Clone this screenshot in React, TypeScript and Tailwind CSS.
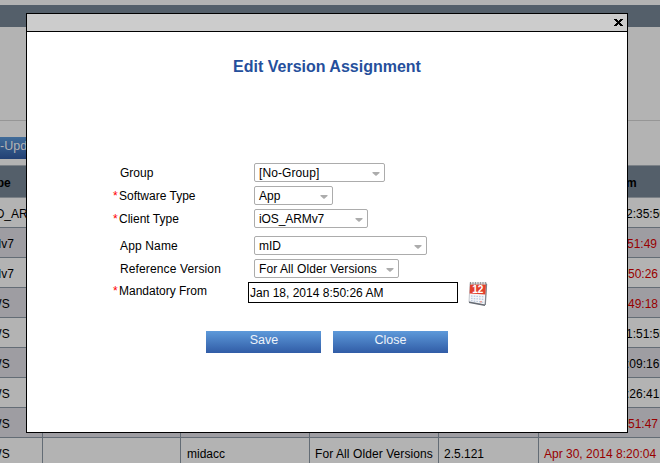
import React from "react";

type Row = { client: string; time: string; pad: string; red?: boolean };

const rows: Row[] = [
  { client: "ANDROID_ARM", time: "2:35:56", pad: "pl-[87px]" },
  { client: "iOS_ARMv7", time: "51:49", pad: "pl-[88px]", red: true },
  { client: "iOS_ARMv7", time: "50:26", pad: "pl-[89px]", red: true },
  { client: "WINDOWS", time: "49:18", pad: "pl-[89px]", red: true },
  { client: "WINDOWS", time: "1:51:55", pad: "pl-[87px]" },
  { client: "WINDOWS", time: ":09:16", pad: "pl-[87px]" },
  { client: "WINDOWS", time: ":26:41", pad: "pl-[87px]" },
  { client: "WINDOWS", time: "51:47", pad: "pl-[89px]", red: true },
];

const cell = "h-full shrink-0 border-r border-[#636c75] whitespace-nowrap overflow-hidden";

function TableRow({ client, shade, children }: { client: string; shade: boolean; children: React.ReactNode }) {
  return (
    <div className={`flex h-[30px] w-[760px] shrink-0 border-b border-[#636c75] leading-[33px] ${shade ? "bg-[#9e9da2]" : "bg-[#b3b3b3]"}`}>
      <div className={`${cell} w-[99px] ${client === "iOS_ARMv7" ? "pl-[4px]" : "pl-[5px]"}`}>{client}</div>
      {children}
    </div>
  );
}

function Select({ value, width, tracking = "" }: { value: string; width: string; tracking?: string }) {
  return (
    <div className={`flex h-[19px] items-center justify-between rounded-[2px] border border-[#acacac] pr-[4px] pl-[4px] ${width}`}>
      <span className={`leading-[17px] whitespace-nowrap ${tracking}`}><span className="relative top-px">{value}</span></span>
      <svg width="8" height="4" viewBox="0 0 8 4" className="mt-[3px] shrink-0">
        <path d="M0.5 0H7.5V1L4 4L0.5 1Z" fill="#acacac" />
      </svg>
    </div>
  );
}

function Field({ label, required, top, tracking = "", children }: { label: string; required?: boolean; top: string; tracking?: string; children: React.ReactNode }) {
  return (
    <div className={`flex h-[19px] items-center ${top}`}>
      <div className="flex w-[141px] items-center pt-[2px] leading-[19px]">
        <span className="w-[6px] text-[#ff0000]">{required ? "*" : ""}</span>
        <span className={`${required ? "" : "pl-[1px]"} ${tracking}`}>{label}</span>
      </div>
      {children}
    </div>
  );
}

function Calendar() {
  return (
    <svg width="20" height="26" viewBox="0 0 20 26" className="ml-[10px]">
      <path d="M2 2.5L18.5 2L17 24L1 21Z" fill="#f5f6f8" stroke="#b5bac2" strokeWidth=".8" />
      <path d="M1 21.3L17 24.3" stroke="#666b73" strokeWidth="1.5" />
      <path d="M18.6 3L17.3 24" stroke="#7d828a" strokeWidth="1.2" />
      <path d="M2 3.6H18L17.3 13.6L1.6 12.6Z" fill="#e2402c" />
      <path d="M2.5 3.4V1M5 3.4V1M7.5 3.4V1M10 3.4V1M12.5 3.4V1M15 3.4V1M17.5 3.4V1" stroke="#777" strokeWidth="1.2" />
      <path d="M2.5 2H18" stroke="#ddd" strokeWidth=".7" />
      <path d="M3 15L16 15.8M3 17.4L16 18.4M3 19.7L15.5 21.3" stroke="#bccbe0" strokeWidth="1.3" strokeDasharray="1.6 1.1" />
      <path d="M12 20.7H14" stroke="#e6a29a" strokeWidth="1.5" />
      <text x="4.2" y="12" fontSize="10" fontWeight="700" fill="#fff" fontFamily="Liberation Sans">12</text>
    </svg>
  );
}

function Dialog() {
  return (
    <div className="absolute top-[13px] left-[26px] flex h-[420px] w-[602px] flex-col border border-black bg-white">
      <div className="flex h-[18px] shrink-0 items-center justify-end border-b border-black bg-[#cccccc] pr-[4px]">
        <svg width="9" height="7" viewBox="0 0 9 7" shapeRendering="crispEdges">
          <path d="M0 0H3V1H6V0H9V1H8V2H7V3H6V4H7V5H8V6H9V7H6V6H5V5H4V6H3V7H0V6H1V5H2V4H3V3H2V2H1V1H0Z" fill="#000" />
          <path d="M4 1H5V2H4Z" fill="#cccccc" />
        </svg>
      </div>
      <h1 className="mt-[25px] text-center text-[16px] leading-[20px] font-bold text-[#254f9c]">Edit Version Assignment</h1>
      <div className="mt-[86px] ml-[86px] flex flex-col">
        <Field label="Group" top=""><Select value="[No-Group]" width="w-[131px]" tracking="tracking-[0.1px]" /></Field>
        <Field label="Software Type" required top="mt-[4px]"><Select value="App" width="w-[79px]" /></Field>
        <Field label="Client Type" required top="mt-[4px]"><Select value="iOS_ARMv7" width="w-[114px]" tracking="-tracking-[0.1px]" /></Field>
        <Field label="App Name" top="mt-[8px]" tracking="tracking-[0.15px]"><Select value="mID" width="w-[173px]" /></Field>
        <Field label="Reference Version" top="mt-[4px]" tracking="tracking-[0.13px]"><Select value="For All Older Versions" width="w-[145px]" tracking="tracking-[0.08px]" /></Field>
        <div className="mt-[4px] flex">
          <div className="flex w-[135px] pt-[1px] leading-[17px]">
            <span className="w-[6px] text-[#ff0000]">*</span>Mandatory From
          </div>
          <div className="h-[21px] w-[210px] border border-black pl-[1px] leading-[20px]">Jan 18, 2014 8:50:26 AM</div>
          <div className="-mt-[1px] h-[21px]"><Calendar /></div>
        </div>
      </div>
      <div className="mt-[28px] ml-[179px] flex gap-[12px] text-[12.5px] leading-[19px] text-[#eef3fa]">
        <button className="h-[22px] w-[115px] bg-linear-to-b from-[#5e9ada] to-[#315ca6] pb-[3px] pl-[1px]">Save</button>
        <button className="h-[22px] w-[115px] bg-linear-to-b from-[#5e9ada] to-[#315ca6] pb-[3px]">Close</button>
      </div>
    </div>
  );
}

export default function App() {
  return (
    <div className="relative flex h-[463px] w-[660px] flex-col overflow-hidden bg-[#b3b3b3] pt-[5px] font-['Liberation_Sans',Arial,sans-serif] text-[12px] text-black">
      <div className="h-[22px] shrink-0 bg-[#545f6a]" />
      <div className="h-[94px] shrink-0 border-b border-[#969696]" />
      <div className="mt-[16px] flex h-[22px] w-[100px] shrink-0 bg-linear-to-b from-[#416c99] to-[#224074] text-[12.5px] leading-[19px] text-[#b3b3b3]">-Update</div>
      <div className="mt-[6px] -ml-[56px] flex shrink-0 flex-col">
        <div className="flex h-[33px] w-[760px] border-y border-[#7b8187] bg-[#545f6a] leading-[34px] font-bold">
          <div className="w-[99px] pl-[3px]">Client Type</div>
          <div className="pl-[583px]">m</div>
        </div>
        {rows.map((r, i) => (
          <TableRow key={i} client={r.client} shade={i % 2 === 1}>
            <div className={`${cell} w-[138px]`} />
            <div className={`${cell} w-[129px]`} />
            <div className={`${cell} w-[129px]`} />
            <div className={`${cell} w-[100px]`} />
            <div className={`${r.pad} ${r.red ? "text-[#980000]" : ""}`}>{r.time}</div>
          </TableRow>
        ))}
        <TableRow client="WINDOWS" shade={false}>
          <div className={`${cell} w-[138px]`} />
          <div className={`${cell} w-[129px] pl-[6px]`}>midacc</div>
          <div className={`${cell} w-[129px] pl-[5px] tracking-[0.08px]`}>For All Older Versions</div>
          <div className={`${cell} w-[100px] pl-[5px]`}>2.5.121</div>
          <div className="pl-[5px] text-[#980000]">Apr 30, 2014 8:20:04</div>
        </TableRow>
      </div>
      <Dialog />
    </div>
  );
}
